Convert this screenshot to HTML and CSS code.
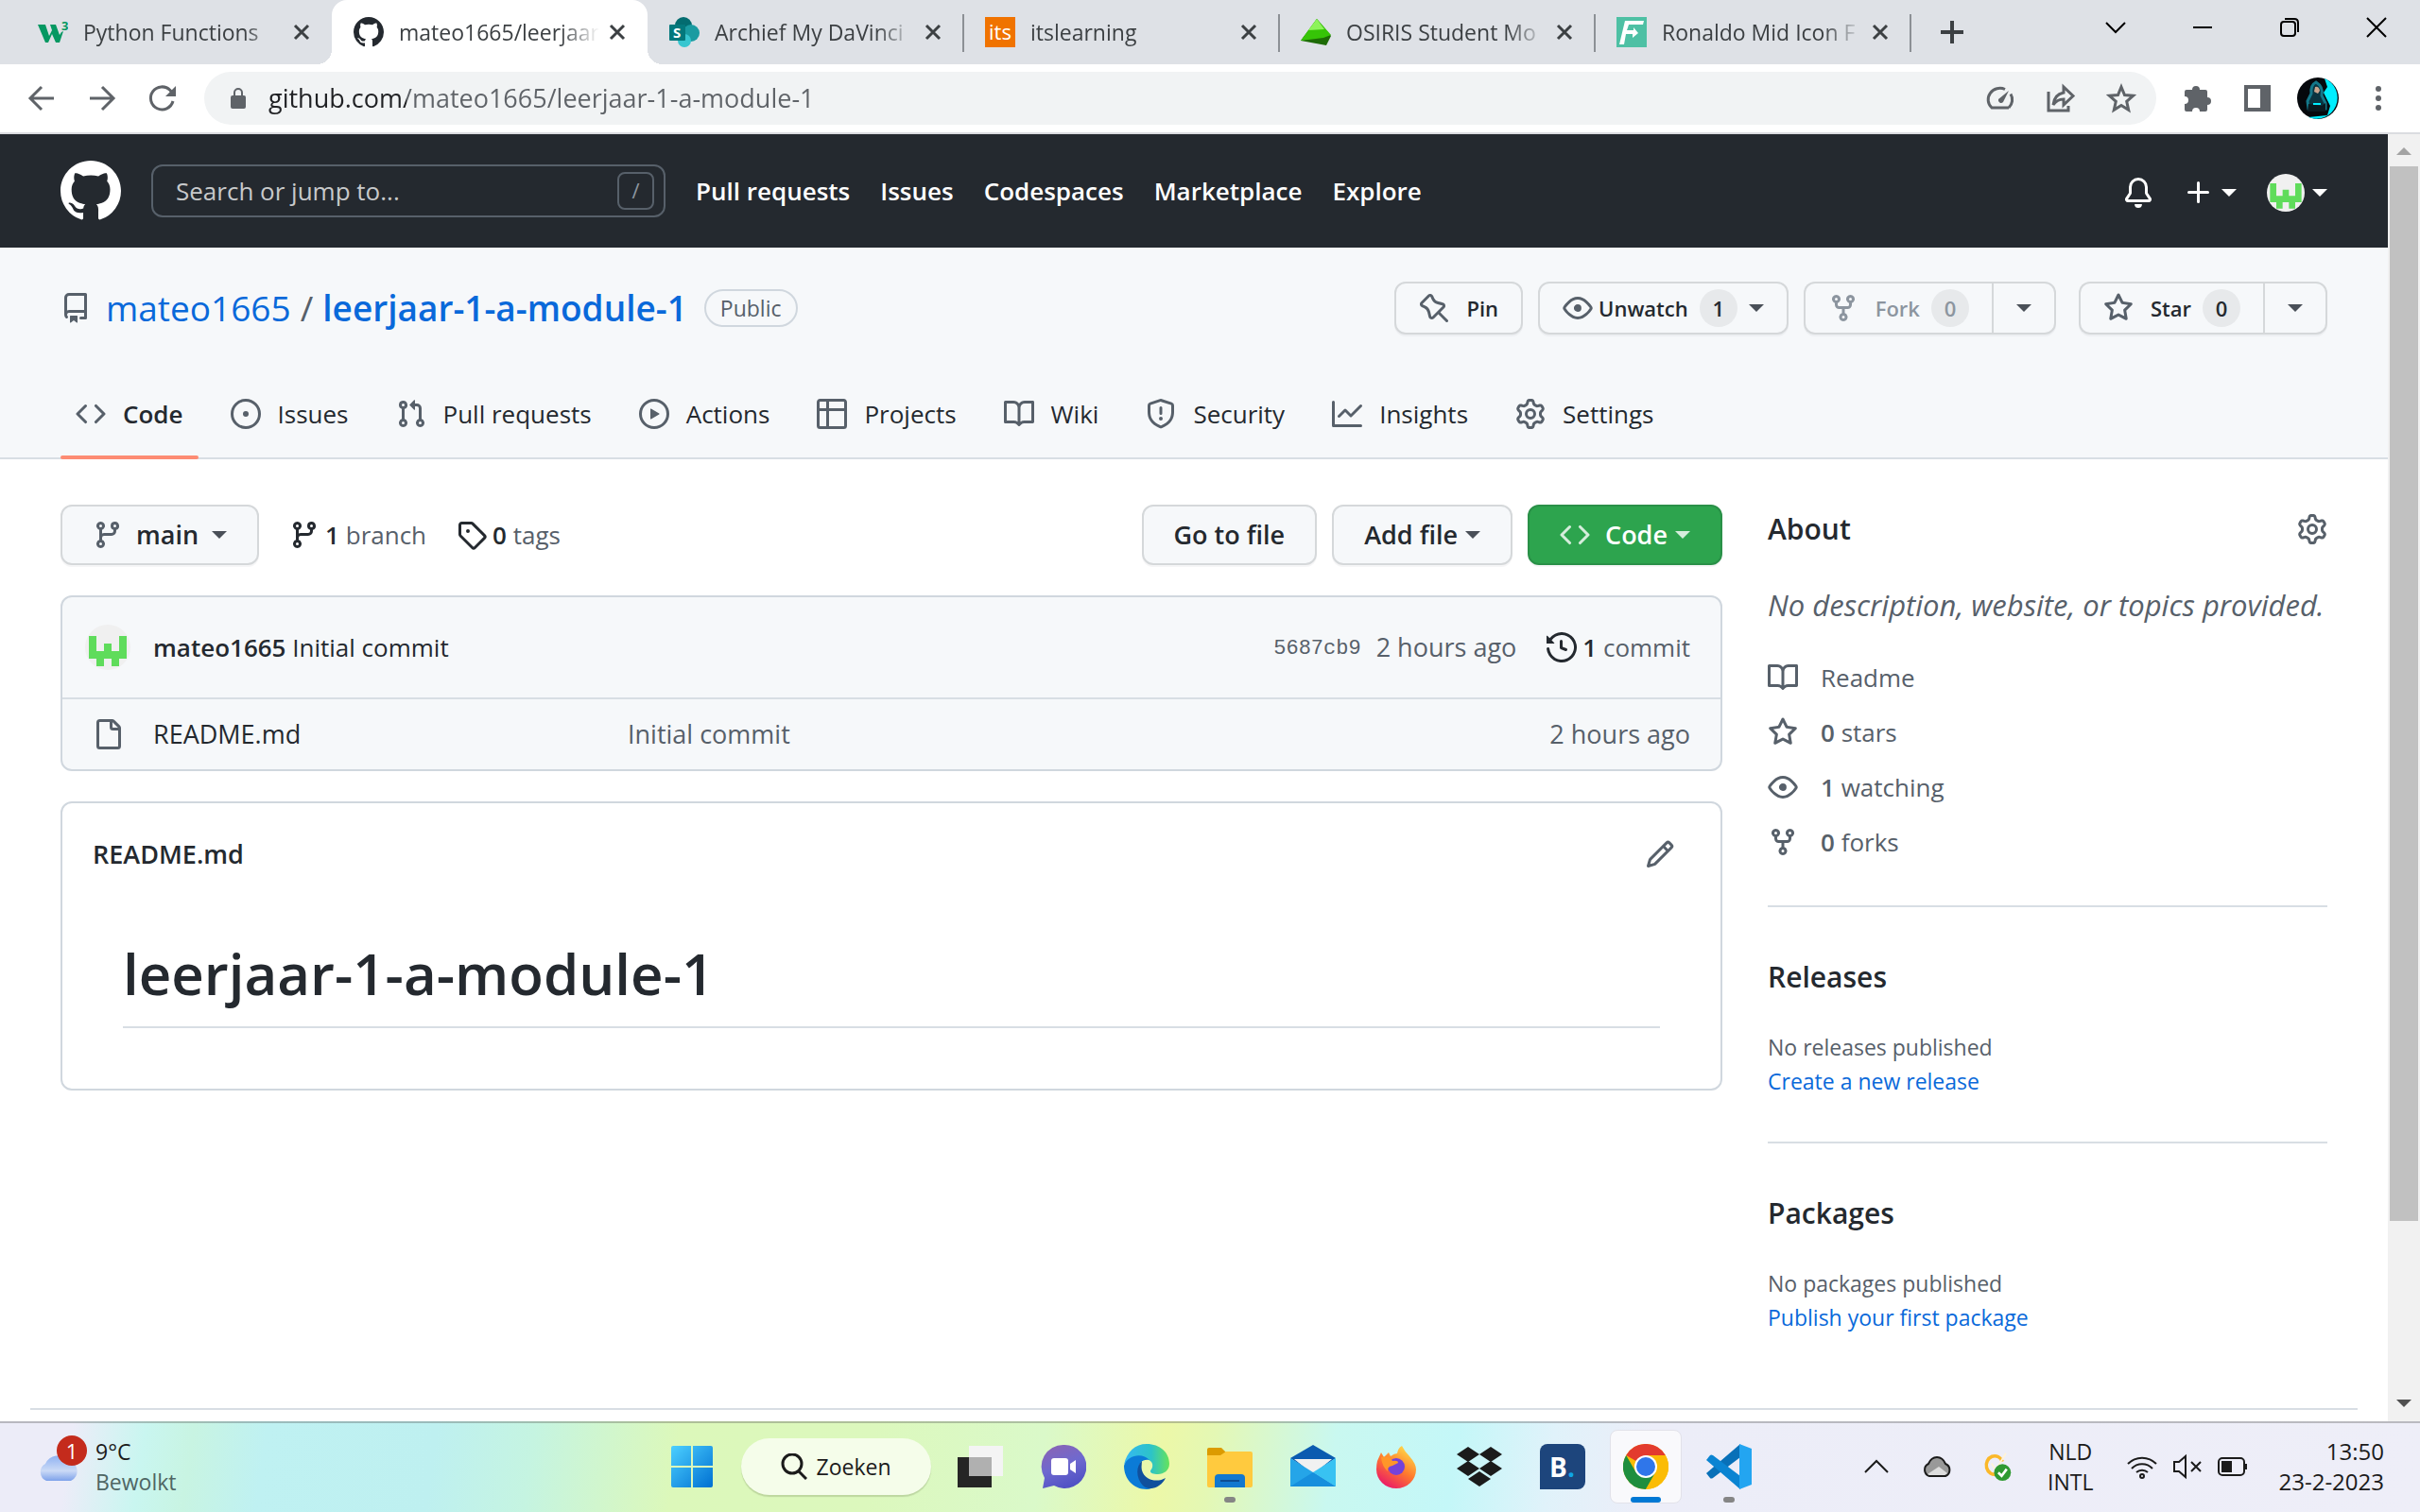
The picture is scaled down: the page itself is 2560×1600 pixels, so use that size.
FILE: index.html
```html
<!DOCTYPE html>
<html lang="nl">
<head>
<meta charset="utf-8">
<meta name="viewport" content="width=device-width, initial-scale=1">
<title>mateo1665/leerjaar-1-a-module-1</title>
<link rel="stylesheet" href="styles.css">
</head>
<body>
<svg class="sprite" aria-hidden="true">
  <symbol id="mark" viewBox="0 0 16 16"><path d="M8 0c4.42 0 8 3.58 8 8a8.013 8.013 0 0 1-5.45 7.59c-.4.08-.55-.17-.55-.38 0-.27.01-1.13.01-2.2 0-.75-.25-1.23-.54-1.48 1.78-.2 3.65-.88 3.65-3.95 0-.88-.31-1.59-.82-2.15.08-.2.36-1.02-.08-2.12 0 0-.67-.22-2.2.82-.64-.18-1.32-.27-2-.27-.68 0-1.36.09-2 .27-1.53-1.03-2.2-.82-2.2-.82-.44 1.1-.16 1.92-.08 2.12-.51.56-.82 1.28-.82 2.15 0 3.06 1.86 3.75 3.64 3.95-.23.2-.44.55-.51 1.07-.46.21-1.61.55-2.33-.66-.15-.24-.6-.83-1.23-.82-.67.01-.27.38.01.53.34.19.73.9.82 1.13.16.45.68 1.31 2.69.94 0 .67.01 1.3.01 1.49 0 .21-.15.45-.55.38A7.995 7.995 0 0 1 0 8c0-4.42 3.58-8 8-8Z"/></symbol>
  <symbol id="code" viewBox="0 0 16 16"><path d="M4.72 3.22a.75.75 0 0 1 1.06 1.06L2.06 8l3.72 3.72a.75.75 0 1 1-1.06 1.06L.47 8.53a.75.75 0 0 1 0-1.06l4.25-4.25Zm6.56 0a.75.75 0 1 0-1.06 1.06L13.94 8l-3.72 3.72a.75.75 0 1 0 1.06 1.06l4.25-4.25a.75.75 0 0 0 0-1.06l-4.25-4.25Z"/></symbol>
  <symbol id="issue" viewBox="0 0 16 16"><path d="M8 9.5a1.5 1.5 0 1 0 0-3 1.5 1.5 0 0 0 0 3Z"/><path d="M8 0a8 8 0 1 1 0 16A8 8 0 0 1 8 0ZM1.5 8a6.5 6.5 0 1 0 13 0 6.5 6.5 0 0 0-13 0Z"/></symbol>
  <symbol id="pull" viewBox="0 0 16 16"><path d="M1.5 3.25a2.25 2.25 0 1 1 3 2.122v5.256a2.251 2.251 0 1 1-1.5 0V5.372A2.25 2.25 0 0 1 1.5 3.25Zm5.677-.177L9.573.677A.25.25 0 0 1 10 .854V2.5h1A2.5 2.5 0 0 1 13.5 5v5.628a2.251 2.251 0 1 1-1.5 0V5a1 1 0 0 0-1-1h-1v1.646a.25.25 0 0 1-.427.177L7.177 3.427a.25.25 0 0 1 0-.354ZM3.75 2.5a.75.75 0 1 0 0 1.5.75.75 0 0 0 0-1.5Zm0 9.5a.75.75 0 1 0 0 1.5.75.75 0 0 0 0-1.5Zm8.25.75a.75.75 0 1 0 1.5 0 .75.75 0 0 0-1.5 0Z"/></symbol>
  <symbol id="play" viewBox="0 0 16 16"><path d="M8 0a8 8 0 1 1 0 16A8 8 0 0 1 8 0ZM1.5 8a6.5 6.5 0 1 0 13 0 6.5 6.5 0 0 0-13 0Zm4.879-2.773 4.264 2.559a.25.25 0 0 1 0 .428l-4.264 2.559A.25.25 0 0 1 6 10.559V5.442a.25.25 0 0 1 .379-.215Z"/></symbol>
  <symbol id="table" viewBox="0 0 16 16"><path d="M0 1.75C0 .784.784 0 1.75 0h12.5C15.216 0 16 .784 16 1.75v12.5A1.75 1.75 0 0 1 14.25 16H1.75A1.75 1.75 0 0 1 0 14.25ZM6.5 6.5v8h7.75a.25.25 0 0 0 .25-.25V6.5Zm8-1.5V1.75a.25.25 0 0 0-.25-.25H6.5V5Zm-13 1.5v7.75c0 .138.112.25.25.25H5v-8ZM5 5V1.5H1.75a.25.25 0 0 0-.25.25V5Z"/></symbol>
  <symbol id="book" viewBox="0 0 16 16"><path d="M0 1.75A.75.75 0 0 1 .75 1h4.253c1.227 0 2.317.59 3 1.501A3.743 3.743 0 0 1 11.006 1h4.245a.75.75 0 0 1 .75.75v10.5a.75.75 0 0 1-.75.75h-4.507a2.25 2.25 0 0 0-1.591.659l-.622.621a.75.75 0 0 1-1.06 0l-.622-.621A2.25 2.25 0 0 0 5.258 13H.75a.75.75 0 0 1-.75-.75Zm7.251 10.324.004-5.073-.002-2.253A2.25 2.25 0 0 0 5.003 2.5H1.5v9h3.757a3.75 3.75 0 0 1 1.994.574ZM8.755 4.75l-.004 7.322a3.752 3.752 0 0 1 1.992-.572H14.5v-9h-3.495a2.25 2.25 0 0 0-2.25 2.25Z"/></symbol>
  <symbol id="shield" viewBox="0 0 16 16"><path d="M7.467.133a1.748 1.748 0 0 1 1.066 0l5.25 1.68A1.75 1.75 0 0 1 15 3.48V7c0 1.566-.32 3.182-1.303 4.682-.983 1.498-2.585 2.813-5.032 3.855a1.697 1.697 0 0 1-1.33 0c-2.447-1.042-4.049-2.357-5.032-3.855C1.32 10.182 1 8.566 1 7V3.48a1.755 1.755 0 0 1 1.217-1.667Zm.61 1.429a.25.25 0 0 0-.153 0l-5.25 1.68a.25.25 0 0 0-.174.238V7c0 1.358.275 2.666 1.057 3.86.784 1.194 2.121 2.34 4.366 3.297a.196.196 0 0 0 .154 0c2.245-.956 3.582-2.104 4.366-3.298C13.225 9.666 13.5 8.36 13.5 7V3.48a.251.251 0 0 0-.174-.237l-5.25-1.68ZM8.75 4.75v3a.75.75 0 0 1-1.5 0v-3a.75.75 0 0 1 1.5 0ZM9 10.5a1 1 0 1 1-2 0 1 1 0 0 1 2 0Z"/></symbol>
  <symbol id="graph" viewBox="0 0 16 16"><path d="M1.5 1.75V13.5h13.75a.75.75 0 0 1 0 1.5H.75a.75.75 0 0 1-.75-.75V1.75a.75.75 0 0 1 1.5 0Zm14.28 2.53-5.25 5.25a.75.75 0 0 1-1.06 0L7 7.06 4.28 9.78a.751.751 0 0 1-1.042-.018.751.751 0 0 1-.018-1.042l3.25-3.25a.75.75 0 0 1 1.06 0L10 7.94l4.72-4.72a.751.751 0 0 1 1.042.018.751.751 0 0 1 .018 1.042Z"/></symbol>
  <symbol id="gear" viewBox="0 0 16 16"><path d="M8 0a8.2 8.2 0 0 1 .701.031C9.444.095 9.99.645 10.16 1.29l.288 1.107c.018.066.079.158.212.224.231.114.454.243.668.386.123.082.233.09.299.071l1.103-.303c.644-.176 1.392.021 1.82.63.27.385.506.792.704 1.218.315.675.111 1.422-.364 1.891l-.814.806c-.049.048-.098.147-.088.294.016.257.016.515 0 .772-.01.147.038.246.088.294l.814.806c.475.469.679 1.216.364 1.891a7.977 7.977 0 0 1-.704 1.217c-.428.61-1.176.807-1.82.63l-1.102-.302c-.067-.019-.177-.011-.3.071a5.909 5.909 0 0 1-.668.386c-.133.066-.194.158-.211.224l-.29 1.106c-.168.646-.715 1.196-1.458 1.26a8.006 8.006 0 0 1-1.402 0c-.743-.064-1.289-.614-1.458-1.26l-.289-1.106c-.018-.066-.079-.158-.212-.224a5.738 5.738 0 0 1-.668-.386c-.123-.082-.233-.09-.299-.071l-1.103.303c-.644.176-1.392-.021-1.82-.63a8.12 8.12 0 0 1-.704-1.218c-.315-.675-.111-1.422.363-1.891l.815-.806c.05-.048.098-.147.088-.294a6.214 6.214 0 0 1 0-.772c.01-.147-.038-.246-.088-.294l-.815-.806C.635 6.045.431 5.298.746 4.623a7.92 7.92 0 0 1 .704-1.217c.428-.61 1.176-.807 1.82-.63l1.102.302c.067.019.177.011.3-.071.214-.143.437-.272.668-.386.133-.066.194-.158.211-.224l.29-1.106C6.009.645 6.556.095 7.299.03 7.53.01 7.764 0 8 0Zm-.571 1.525c-.036.003-.108.036-.137.146l-.289 1.105c-.147.561-.549.967-.998 1.189-.173.086-.34.183-.5.29-.417.278-.97.423-1.529.27l-1.103-.303c-.109-.03-.175.016-.195.045-.22.312-.412.644-.573.99-.014.031-.021.11.059.19l.815.806c.411.406.562.957.53 1.456a4.709 4.709 0 0 0 0 .582c.032.499-.119 1.05-.53 1.456l-.815.806c-.081.08-.073.159-.059.19.162.346.353.677.573.989.02.03.085.076.195.046l1.102-.303c.56-.153 1.113-.008 1.53.27.161.107.328.204.501.29.447.222.85.629.997 1.189l.289 1.105c.029.109.101.143.137.146a6.6 6.6 0 0 0 1.142 0c.036-.003.108-.036.137-.146l.289-1.105c.147-.561.549-.967.998-1.189.173-.086.34-.183.5-.29.417-.278.97-.423 1.529-.27l1.103.303c.109.029.175-.016.195-.045.22-.313.411-.644.573-.99.014-.031.021-.11-.059-.19l-.815-.806c-.411-.406-.562-.957-.53-1.456a4.709 4.709 0 0 0 0-.582c-.032-.499.119-1.05.53-1.456l.815-.806c.081-.08.073-.159.059-.19a6.464 6.464 0 0 0-.573-.989c-.02-.03-.085-.076-.195-.046l-1.102.303c-.56.153-1.113.008-1.53-.27a4.44 4.44 0 0 0-.501-.29c-.447-.222-.85-.629-.997-1.189l-.289-1.105c-.029-.11-.101-.143-.137-.146a6.6 6.6 0 0 0-1.142 0ZM11 8a3 3 0 1 1-6 0 3 3 0 0 1 6 0ZM9.5 8a1.5 1.5 0 1 0-3.001.001A1.5 1.5 0 0 0 9.5 8Z"/></symbol>
  <symbol id="branch" viewBox="0 0 16 16"><path d="M9.5 3.25a2.25 2.25 0 1 1 3 2.122V6A2.5 2.5 0 0 1 10 8.5H6a1 1 0 0 0-1 1v1.128a2.251 2.251 0 1 1-1.5 0V5.372a2.25 2.25 0 1 1 1.5 0v1.836A2.493 2.493 0 0 1 6 7h4a1 1 0 0 0 1-1v-.628A2.25 2.25 0 0 1 9.5 3.25Zm-6 0a.75.75 0 1 0 1.5 0 .75.75 0 0 0-1.5 0Zm8.25-.75a.75.75 0 1 0 0 1.5.75.75 0 0 0 0-1.5ZM4.25 12a.75.75 0 1 0 0 1.5.75.75 0 0 0 0-1.5Z"/></symbol>
  <symbol id="fork" viewBox="0 0 16 16"><path d="M5 5.372v.878c0 .414.336.75.75.75h4.5a.75.75 0 0 0 .75-.75v-.878a2.25 2.25 0 1 1 1.5 0v.878a2.25 2.25 0 0 1-2.25 2.25h-1.5v2.128a2.251 2.251 0 1 1-1.5 0V8.5h-1.5A2.25 2.25 0 0 1 3.5 6.25v-.878a2.25 2.25 0 1 1 1.5 0ZM5 3.25a.75.75 0 1 0-1.5 0 .75.75 0 0 0 1.5 0Zm6.75.75a.75.75 0 1 0 0-1.5.75.75 0 0 0 0 1.5Zm-3 8.75a.75.75 0 1 0-1.5 0 .75.75 0 0 0 1.5 0Z"/></symbol>
  <symbol id="star" viewBox="0 0 16 16"><path d="M8 .25a.75.75 0 0 1 .673.418l1.882 3.815 4.21.612a.75.75 0 0 1 .416 1.279l-3.046 2.97.719 4.192a.751.751 0 0 1-1.088.791L8 12.347l-3.766 1.98a.75.75 0 0 1-1.088-.79l.72-4.194L.818 6.374a.75.75 0 0 1 .416-1.28l4.21-.611L7.327.668A.75.75 0 0 1 8 .25Zm0 2.445L6.615 5.5a.75.75 0 0 1-.564.41l-3.097.45 2.24 2.184a.75.75 0 0 1 .216.664l-.528 3.084 2.769-1.456a.75.75 0 0 1 .698 0l2.77 1.456-.53-3.084a.75.75 0 0 1 .216-.664l2.24-2.183-3.096-.45a.75.75 0 0 1-.564-.41L8 2.694Z"/></symbol>
  <symbol id="eye" viewBox="0 0 16 16"><path d="M8 2c1.981 0 3.671.992 4.933 2.078 1.27 1.091 2.187 2.345 2.637 3.023a1.62 1.62 0 0 1 0 1.798c-.45.678-1.367 1.932-2.637 3.023C11.67 13.008 9.981 14 8 14c-1.981 0-3.671-.992-4.933-2.078C1.797 10.83.88 9.576.43 8.898a1.62 1.62 0 0 1 0-1.798c.45-.677 1.367-1.931 2.637-3.022C4.33 2.992 6.019 2 8 2ZM1.679 7.932a.12.12 0 0 0 0 .136c.411.622 1.241 1.75 2.366 2.717C5.176 11.758 6.527 12.5 8 12.5c1.473 0 2.825-.742 3.955-1.715 1.124-.967 1.954-2.096 2.366-2.717a.12.12 0 0 0 0-.136c-.412-.621-1.242-1.75-2.366-2.717C10.824 4.242 9.473 3.5 8 3.5c-1.473 0-2.825.742-3.955 1.715-1.124.967-1.954 2.096-2.366 2.717ZM8 10a2 2 0 1 1-.001-3.999A2 2 0 0 1 8 10Z"/></symbol>
  <symbol id="repo" viewBox="0 0 16 16"><path d="M2 2.5A2.5 2.5 0 0 1 4.5 0h8.75a.75.75 0 0 1 .75.75v12.5a.75.75 0 0 1-.75.75h-2.5a.75.75 0 0 1 0-1.5h1.75v-2h-8a1 1 0 0 0-.714 1.7.75.75 0 1 1-1.072 1.05A2.495 2.495 0 0 1 2 11.5Zm10.5-1h-8a1 1 0 0 0-1 1v6.708A2.486 2.486 0 0 1 4.5 9h8ZM5 12.25a.25.25 0 0 1 .25-.25h3.5a.25.25 0 0 1 .25.25v3.25a.25.25 0 0 1-.4.2l-1.45-1.087a.249.249 0 0 0-.3 0L5.4 15.7a.25.25 0 0 1-.4-.2Z"/></symbol>
  <symbol id="tag" viewBox="0 0 16 16"><path d="M1 7.775V2.75C1 1.784 1.784 1 2.75 1h5.025c.464 0 .91.184 1.238.513l6.25 6.25a1.75 1.75 0 0 1 0 2.474l-5.026 5.026a1.75 1.75 0 0 1-2.474 0l-6.25-6.25A1.752 1.752 0 0 1 1 7.775Zm1.5 0c0 .066.026.13.073.177l6.25 6.25a.25.25 0 0 0 .354 0l5.025-5.025a.25.25 0 0 0 0-.354l-6.25-6.25a.25.25 0 0 0-.177-.073H2.75a.25.25 0 0 0-.25.25ZM6 5a1 1 0 1 1 0 2 1 1 0 0 1 0-2Z"/></symbol>
  <symbol id="history" viewBox="0 0 16 16"><path d="m.427 1.927 1.215 1.215a8.002 8.002 0 1 1-1.6 5.685.75.75 0 1 1 1.493-.154 6.5 6.5 0 1 0 1.18-4.458l1.358 1.358A.25.25 0 0 1 3.896 6H.25A.25.25 0 0 1 0 5.75V2.104a.25.25 0 0 1 .427-.177ZM7.75 4a.75.75 0 0 1 .75.75v2.992l2.028.812a.75.75 0 0 1-.557 1.392l-2.5-1A.751.751 0 0 1 7 8.25v-3.5A.75.75 0 0 1 7.75 4Z"/></symbol>
  <symbol id="file" viewBox="0 0 16 16"><path d="M2 1.75C2 .784 2.784 0 3.75 0h6.586c.464 0 .909.184 1.237.513l2.914 2.914c.329.328.513.773.513 1.237v9.586A1.75 1.75 0 0 1 13.25 16h-9.5A1.75 1.75 0 0 1 2 14.25Zm1.75-.25a.25.25 0 0 0-.25.25v12.5c0 .138.112.25.25.25h9.5a.25.25 0 0 0 .25-.25V6h-2.75A1.75 1.75 0 0 1 9 4.25V1.5Zm6.75.062V4.25c0 .138.112.25.25.25h2.688l-.011-.013-2.914-2.914-.013-.011Z"/></symbol>
  <symbol id="pencil" viewBox="0 0 16 16"><path d="M11.013 1.427a1.75 1.75 0 0 1 2.474 0l1.086 1.086a1.75 1.75 0 0 1 0 2.474l-8.61 8.61c-.21.21-.47.364-.756.445l-3.251.93a.75.75 0 0 1-.927-.928l.929-3.25c.081-.286.235-.547.445-.758l8.61-8.61Zm.176 4.823L9.75 4.81l-6.286 6.287a.253.253 0 0 0-.064.108l-.558 1.953 1.953-.558a.253.253 0 0 0 .108-.064Zm1.238-3.763a.25.25 0 0 0-.354 0L10.811 3.75l1.439 1.44 1.263-1.263a.25.25 0 0 0 0-.354Z"/></symbol>
  <symbol id="bell" viewBox="0 0 16 16"><path d="M8 16a2 2 0 0 0 1.985-1.75c.017-.137-.097-.25-.235-.25h-3.5c-.138 0-.252.113-.235.25A2 2 0 0 0 8 16ZM3 5a5 5 0 0 1 10 0v2.947c0 .05.015.098.042.139l1.703 2.555A1.519 1.519 0 0 1 13.482 13H2.518a1.516 1.516 0 0 1-1.263-2.36l1.703-2.554A.255.255 0 0 0 3 7.947Zm5-3.5A3.5 3.5 0 0 0 4.5 5v2.947c0 .346-.102.683-.294.97l-1.703 2.556a.017.017 0 0 0-.003.01l.001.006c0 .002.002.004.004.006l.006.004.007.001h10.964l.007-.001.006-.004.004-.006.001-.007a.017.017 0 0 0-.003-.01l-1.703-2.554a1.745 1.745 0 0 1-.294-.97V5A3.5 3.5 0 0 0 8 1.5Z"/></symbol>
  <symbol id="plus" viewBox="0 0 16 16"><path d="M7.75 2a.75.75 0 0 1 .75.75V7h4.25a.75.75 0 0 1 0 1.5H8.5v4.25a.75.75 0 0 1-1.5 0V8.5H2.75a.75.75 0 0 1 0-1.5H7V2.75A.75.75 0 0 1 7.75 2Z"/></symbol>
  <symbol id="pin" viewBox="0 0 16 16"><path transform="matrix(-1 0 0 1 16 0)" fill-rule="evenodd" d="m11.294.984 3.722 3.722a1.75 1.75 0 0 1-.504 2.826l-1.327.613a3.089 3.089 0 0 0-1.707 2.084l-.584 2.454c-.317 1.332-1.972 1.8-2.94.832L5.75 11.311 1.78 15.28a.749.749 0 1 1-1.06-1.06l3.969-3.97-2.204-2.204c-.968-.968-.5-2.623.832-2.94l2.454-.584a3.08 3.08 0 0 0 2.084-1.707l.613-1.327a1.75 1.75 0 0 1 2.826-.504ZM6.283 9.723l2.732 2.731a.25.25 0 0 0 .42-.119l.584-2.454a4.586 4.586 0 0 1 2.537-3.098l1.328-.613a.25.25 0 0 0 .072-.404l-3.722-3.722a.25.25 0 0 0-.404.072l-.613 1.328a4.584 4.584 0 0 1-3.098 2.537l-2.454.584a.25.25 0 0 0-.119.42l2.731 2.732Z"/></symbol>
  <symbol id="close" viewBox="0 0 20 20"><path d="M3 3l14 14M17 3L3 17" fill="none" stroke="currentColor" stroke-width="3"/></symbol>
  <symbol id="identicon" viewBox="0 0 12 12"><path fill="#f0f0f0" d="M0 0h12v12H0z"/><path fill="#5fdc5b" d="M1 3h2v4h2V5h2v2h2V3h2v6H9v2H7V9H5v2H3V9H1z"/></symbol>
</svg>

<header class="browser">
  <div class="tabstrip">
    <div class="tab">
      <svg class="favicon" viewBox="0 0 32 32"><path d="M0 8h8l4 12 3-6-2-6h6l4 11 2-3 2-1-4 12h-4l-4-9-4 9H8z" fill="#059862"/><text x="25" y="14" font-family="Open Sans" font-weight="700" font-size="13" fill="#059862">3</text></svg>
      <span class="tab-title">Python Functions</span>
      <button class="tab-close" aria-label="Sluiten"><svg><use href="#close"/></svg></button>
    </div>
    <div class="tab active">
      <svg class="favicon mark"><use href="#mark"/></svg>
      <span class="tab-title">mateo1665/leerjaar</span>
      <button class="tab-close" aria-label="Sluiten"><svg><use href="#close"/></svg></button>
    </div>
    <div class="tab line">
      <svg class="favicon" viewBox="0 0 32 32"><circle cx="15" cy="9" r="9" fill="#036c70"/><circle cx="23" cy="17" r="9" fill="#1a9ba1"/><circle cx="16" cy="25" r="7" fill="#37c6d0"/><rect y="8" width="17" height="17" rx="1" fill="#03787c"/><text x="4" y="22" font-family="Open Sans" font-weight="700" font-size="15" fill="#fff">S</text></svg>
      <span class="tab-title">Archief My DaVinci</span>
      <button class="tab-close" aria-label="Sluiten"><svg><use href="#close"/></svg></button>
    </div>
    <div class="tab line">
      <span class="favicon its">its</span>
      <span class="tab-title">itslearning</span>
      <button class="tab-close" aria-label="Sluiten"><svg><use href="#close"/></svg></button>
    </div>
    <div class="tab line">
      <svg class="favicon" viewBox="0 0 32 32"><path d="M17 2L32 20l-5 10L0 25z" fill="#1d6b06"/><path d="M17 2L0 25l24-3 8-3z" fill="#36c407"/><path d="M17 2L8 14l17-1z" fill="#8df35a"/></svg>
      <span class="tab-title">OSIRIS Student Mo</span>
      <button class="tab-close" aria-label="Sluiten"><svg><use href="#close"/></svg></button>
    </div>
    <div class="tab line">
      <svg class="favicon" viewBox="0 0 32 32"><path d="M0 0h32v32H0z" fill="#4ec0a4"/><path d="M9 4h20l-1 4H13l-2 6h7v-3l5 6-6 5v-4h-7L8 29H3z" fill="#fff"/></svg>
      <span class="tab-title">Ronaldo Mid Icon F</span>
      <button class="tab-close" aria-label="Sluiten"><svg><use href="#close"/></svg></button>
    </div>
    <button class="new-tab" aria-label="Nieuw tabblad"><svg viewBox="0 0 24 24"><path d="M12 0v24M0 12h24" stroke="#3c4043" stroke-width="4"/></svg></button>
    <div class="window-controls">
      <button aria-label="Tabbladen zoeken"><svg viewBox="0 0 20 20"><path d="M0 5l10 10L20 5"/></svg></button>
      <button aria-label="Minimaliseren"><svg viewBox="0 0 20 20"><path d="M0 10h20"/></svg></button>
      <button aria-label="Vorig formaat"><svg viewBox="0 0 20 20"><rect x="1" y="4" width="15" height="15" rx="3"/><path d="M5 1h10q4 0 4 4v10"/></svg></button>
      <button aria-label="Venster sluiten"><svg viewBox="0 0 20 20"><path d="M0 0l20 20M20 0L0 20"/></svg></button>
    </div>
  </div>
  <div class="toolbar">
    <button class="tool" aria-label="Terug"><svg viewBox="0 0 32 32"><path d="M29 16H5M16 4L4 16l12 12"/></svg></button>
    <button class="tool" aria-label="Vooruit"><svg viewBox="0 0 32 32"><path d="M3 16h24M16 4l12 12-12 12"/></svg></button>
    <button class="tool" aria-label="Vernieuwen"><svg viewBox="0 0 32 32"><path d="M27 19A12 12 0 1 1 24 7.500l3 3.500"/><path class="solid" d="M30 3v11H19z"/></svg></button>
    <div class="omnibox">
      <svg class="lock" viewBox="0 0 16 22"><rect y="8" width="16" height="14" rx="2" fill="#5f6368"/><path d="M4 9V5a4 4 0 0 1 8 0v4" fill="none" stroke="#5f6368" stroke-width="2"/></svg>
      <input class="url" type="text" aria-label="Adresbalk" value="github.com/mateo1665/leerjaar-1-a-module-1">
      <button class="tool" aria-label="Prestaties"><svg viewBox="0 0 32 32"><path d="M25 26H7A12.500 12 0 0 1 21 6.500M27 11.500A12.500 12 0 0 1 25 26"/><path class="solid" d="M25 8l-6 12a3 3 0 0 1-5-3z"/></svg></button>
      <button class="tool" aria-label="Delen"><svg viewBox="0 0 32 32"><path d="M3 9v20h21v-5M19 4v6Q9 12 8 23q4-6 11-6v6l10-9.500z"/></svg></button>
      <button class="tool" aria-label="Bladwijzer"><svg viewBox="0 0 32 32"><path d="M16 4l3.500 8.500 9 .8-6.800 6 2 9L16 23.500 8.300 28.300l2-9-6.800-6 9-.8z"/></svg></button>
    </div>
    <button class="tool" aria-label="Extensies"><svg viewBox="0 0 32 32"><path class="solid" d="M11 7a4 4 0 0 1 8 0h6a2 2 0 0 1 2 2v6a4 4 0 0 1 0 8v5a2 2 0 0 1-2 2h-6a4 4 0 0 0-8 0H5a2 2 0 0 1-2-2v-6a4 4 0 0 0 0-8V9a2 2 0 0 1 2-2z"/></svg></button>
    <button class="tool" aria-label="Zijvenster"><svg viewBox="0 0 32 32"><path class="solid" fill-rule="evenodd" d="M2 2h28v28H2zM6 6v20h13V6z"/></svg></button>
    <button class="tool profile" aria-label="Profiel"><svg viewBox="0 0 44 44"><circle cx="22" cy="22" r="22" fill="#05080c"/><path d="M29 1a22 22 0 0 1-17 41l20-2 3-10-7-14 4-6z" fill="#0ef"/><path d="M20 5q-6 3-5 12l-4 8 1 8h18v-6l-4-8q2-9-6-14z" fill="#0a3440" stroke="#13788a"/><path d="M19 10q4-1 5 4l-2 3-4-2z" fill="#c9a58d"/><path d="M12 28l14 2 4-3v9H11z" fill="#0b1a20"/><path d="M17 28h8" stroke="#0ef" stroke-width="2"/></svg></button>
    <button class="tool" aria-label="Menu"><svg viewBox="0 0 32 32"><g class="solid"><circle cx="16" cy="6" r="3"/><circle cx="16" cy="16" r="3"/><circle cx="16" cy="26" r="3"/></g></svg></button>
  </div>
</header>

<div class="viewport">
  <div class="page">
    <header class="site-header">
      <a class="logo" href="#" aria-label="Homepage"><svg><use href="#mark"/></svg></a>
      <label class="search"><input type="text" aria-label="Search" placeholder="Search or jump to..."><kbd>/</kbd></label>
      <nav class="site-nav"><a href="#">Pull requests</a><a href="#">Issues</a><a href="#">Codespaces</a><a href="#">Marketplace</a><a href="#">Explore</a></nav>
      <div class="user-tools">
        <button aria-label="Notifications"><svg class="icon"><use href="#bell"/></svg></button>
        <button class="with-caret" aria-label="Create new"><svg class="icon"><use href="#plus"/></svg><i class="caret"></i></button>
        <button class="with-caret" aria-label="Account"><svg class="avatar"><use href="#identicon"/></svg><i class="caret"></i></button>
      </div>
    </header>

    <section class="repo-head">
      <div class="repo-title">
        <svg class="icon"><use href="#repo"/></svg>
        <h2><a href="#">mateo1665</a><span>/</span><a class="strong" href="#">leerjaar-1-a-module-1</a></h2>
        <span class="badge">Public</span>
        <div class="repo-actions">
          <button class="btn small"><svg class="icon"><use href="#pin"/></svg><span>Pin</span></button>
          <button class="btn small watch"><svg class="icon"><use href="#eye"/></svg><span>Unwatch</span><span class="count">1</span><i class="caret"></i></button>
          <div class="btn-group">
            <button class="btn small" disabled><svg class="icon"><use href="#fork"/></svg><span>Fork</span><span class="count">0</span></button><button class="btn small drop" aria-label="Forks"><i class="caret"></i></button>
          </div>
          <div class="btn-group last">
            <button class="btn small"><svg class="icon"><use href="#star"/></svg><span>Star</span><span class="count">0</span></button><button class="btn small drop" aria-label="Lists"><i class="caret"></i></button>
          </div>
        </div>
      </div>
      <nav class="repo-nav">
        <a class="current" href="#"><svg class="icon"><use href="#code"/></svg>Code</a>
        <a href="#"><svg class="icon"><use href="#issue"/></svg>Issues</a>
        <a href="#"><svg class="icon"><use href="#pull"/></svg>Pull requests</a>
        <a href="#"><svg class="icon"><use href="#play"/></svg>Actions</a>
        <a href="#"><svg class="icon"><use href="#table"/></svg>Projects</a>
        <a href="#"><svg class="icon"><use href="#book"/></svg>Wiki</a>
        <a href="#"><svg class="icon"><use href="#shield"/></svg>Security</a>
        <a href="#"><svg class="icon"><use href="#graph"/></svg>Insights</a>
        <a href="#"><svg class="icon"><use href="#gear"/></svg>Settings</a>
      </nav>
    </section>

    <div class="layout">
      <main>
        <div class="file-nav">
          <button class="btn branch-btn"><svg class="icon"><use href="#branch"/></svg><span>main</span><i class="caret"></i></button>
          <a class="stat branches" href="#"><svg class="icon"><use href="#branch"/></svg><span><b>1</b> branch</span></a>
          <a class="stat tags" href="#"><svg class="icon"><use href="#tag"/></svg><span><b>0</b> tags</span></a>
          <div class="file-actions">
            <button class="btn">Go to file</button>
            <button class="btn tight">Add file<i class="caret"></i></button>
            <button class="btn tight primary"><svg class="icon"><use href="#code"/></svg><span>Code</span><i class="caret"></i></button>
          </div>
        </div>

        <section class="box files">
          <div class="commit">
            <svg class="avatar"><use href="#identicon"/></svg>
            <p><b>mateo1665</b> Initial commit</p>
            <div class="commit-meta">
              <a class="sha" href="#">5687cb9</a>
              <span class="when">2 hours ago</span>
              <a class="commits" href="#"><svg class="icon"><use href="#history"/></svg><span><b>1</b> commit</span></a>
            </div>
          </div>
          <table>
            <tr>
              <td class="kind"><svg class="icon"><use href="#file"/></svg></td>
              <td class="name"><a href="#">README.md</a></td>
              <td>Initial commit</td>
              <td class="age">2 hours ago</td>
            </tr>
          </table>
        </section>

        <section class="box readme">
          <div class="readme-head"><h3>README.md</h3><button aria-label="Edit this file"><svg class="icon"><use href="#pencil"/></svg></button></div>
          <article><h1>leerjaar-1-a-module-1</h1></article>
        </section>
      </main>

      <aside>
        <section>
          <div class="about-head"><h2>About</h2><button aria-label="Edit repository details"><svg class="icon"><use href="#gear"/></svg></button></div>
          <p class="description">No description, website, or topics provided.</p>
          <ul>
            <li><a href="#"><svg class="icon"><use href="#book"/></svg><span>Readme</span></a></li>
            <li><a href="#"><svg class="icon"><use href="#star"/></svg><span><b>0</b> stars</span></a></li>
            <li><a href="#"><svg class="icon"><use href="#eye"/></svg><span><b>1</b> watching</span></a></li>
            <li><a href="#"><svg class="icon"><use href="#fork"/></svg><span><b>0</b> forks</span></a></li>
          </ul>
        </section>
        <section><h2>Releases</h2><p class="note">No releases published<br><a href="#">Create a new release</a></p></section>
        <section><h2>Packages</h2><p class="note">No packages published<br><a href="#">Publish your first package</a></p></section>
      </aside>
    </div>
    <footer class="site-footer"></footer>
  </div>
  <div class="scrollbar" aria-hidden="true"><i class="up"></i><i class="thumb"></i><i class="down"></i></div>
</div>

<footer class="taskbar">
  <button class="weather">
    <span class="cloud"><svg viewBox="0 0 48 30"><defs><linearGradient id="cl" x2="0" y2="1"><stop stop-color="#8fb2f2"/><stop offset=".6" stop-color="#cbdaf6"/><stop offset="1" stop-color="#7ea2ea"/></linearGradient></defs><path d="M11 30a10 10 0 0 1-1-18A14 14 0 0 1 34 9a11 11 0 0 1 3 21z" fill="url(#cl)"/></svg><span class="alert">1</span></span>
    <span class="weather-text">9°C<br><small>Bewolkt</small></span>
  </button>
  <div class="apps">
    <button aria-label="Start"><svg viewBox="0 0 48 48"><defs><linearGradient id="win" x2="1" y2="1"><stop stop-color="#4cd0ff"/><stop offset="1" stop-color="#0070d2"/></linearGradient></defs><path d="M2 4q0-2 2-2h19v21H2zM25 2h19q2 0 2 2v19H25zM2 25h21v21H4q-2 0-2-2zM25 25h21v19q0 2-2 2H25z" fill="url(#win)"/></svg></button>
    <button class="task-search"><svg viewBox="0 0 28 28"><circle cx="12" cy="11" r="10"/><path d="M19 19l8 8"/></svg>Zoeken</button>
    <button aria-label="Taakweergave"><svg viewBox="0 0 48 48"><path d="M0 14h36v32H0z" fill="#252525"/><path d="M12 2h36v32H12z" fill="#f4f4f4"/><path d="M12 14h24v20H12z" fill="#b0b0b0"/></svg></button>
    <button aria-label="Chat"><svg viewBox="0 0 48 48"><defs><linearGradient id="chat" x1=".2" x2=".6" y2="1"><stop stop-color="#8a64b4"/><stop offset=".5" stop-color="#6e69cf"/><stop offset="1" stop-color="#4f50c4"/></linearGradient></defs><path d="M24 1a23 23 0 1 1-10 43L2 47l2-11A23 23 0 0 1 24 1z" fill="url(#chat)"/><rect x="11" y="15" width="18" height="18" rx="3" fill="#fff"/><path d="M31 21l6-4v14l-6-4z" fill="#fff"/></svg></button>
    <button aria-label="Edge"><svg viewBox="0 0 48 48"><defs><linearGradient id="e1"><stop stop-color="#35b8f3"/><stop offset=".6" stop-color="#2cc3c8"/><stop offset="1" stop-color="#66e35b"/></linearGradient></defs><path d="M0 22C3 8 12 0 24 0c14 0 24 9 24 21 0 7-6 11-12 11-5 0-8-1-8-3s3-3 2-8C28 14 8 10 0 22z" fill="url(#e1)"/><path d="M0 23c4-12 20-14 27-6-8-1-11 3-11 9 0 12 10 17 18 18-3 2-6 4-10 4C10 48 0 37 0 23z" fill="#0b7bd7"/><path d="M19 18c-7 6-6 19 1 26 8 7 20 1 24-8-8 5-22 3-25-8-1-4 0-7 0-10z" fill="#10509d"/></svg></button>
    <button class="open" aria-label="Verkenner"><svg viewBox="0 0 48 48"><path d="M0 6q0-2 2-2h13l5 5-5 5H0z" fill="#dc9b00"/><path d="M0 12h14l6-4h26q2 0 2 2v34q0 2-2 2H2q-2 0-2-2z" fill="#ffca3e"/><path d="M8 46V36q0-4 4-4h24q4 0 4 4v10z" fill="#1278cf"/><path d="M14 39h20" stroke="#0c4e94" stroke-width="2"/></svg></button>
    <button aria-label="Mail"><svg viewBox="0 0 48 48"><path d="M0 15L24 1l24 14-24 16z" fill="#0a5bb0"/><path d="M4 16h40L24 32z" fill="#f1f1f1"/><path d="M0 15l48 30H0z" fill="#25a5e8"/><path d="M48 15v30L24 30z" fill="#38c2f2"/><path d="M0 45l24-15 24 15z" fill="#168fdd"/></svg></button>
    <button aria-label="Firefox"><svg viewBox="0 0 48 48"><defs><linearGradient id="fx" x1=".8" x2=".2" y2="1"><stop stop-color="#ffe24a"/><stop offset=".5" stop-color="#ff7a2d"/><stop offset="1" stop-color="#e8106e"/></linearGradient></defs><path d="M4 18l4-9 3 5 5-5 2 4q4-3 7-3 1-6 5-8 3 6 8 11 7 8 7 14A21 20 0 0 1 3 27q0-5 1-9z" fill="url(#fx)"/><circle cx="24" cy="24" r="9" fill="#7542d9"/><path d="M8 14q9-2 12 4 6-1 6 2-4 2-6 3-6 1-5 6-6-5-7-15z" fill="#ff9629"/></svg></button>
    <button aria-label="Dropbox"><svg viewBox="0 0 48 48"><path d="M12 3l12 8-12 8L0 11zM36 3l12 8-12 8-12-8zM12 18l12 8-12 8L0 26zM36 18l12 8-12 8-12-8zM24 29l12 8-12 8-12-8z"/></svg></button>
    <button aria-label="Booking"><span class="booking">B<i>.</i></span></button>
    <button class="open focused" aria-label="Chrome"><svg viewBox="0 0 48 48"><circle cx="24" cy="24" r="24" fill="#fbbc04"/><path d="M24 24L3.200 12a24 24 0 0 1 41.600 0z" fill="#e33b2e"/><path d="M3.200 12A24 24 0 0 0 24 48l10.400-18L24 24 13.600 30z" fill="#1e8e3e"/><path d="M24 12h20.800a24 24 0 0 1-20.800 36l10.400-18z" fill="#fbbc04"/><circle cx="24" cy="24" r="12" fill="#fff"/><circle cx="24" cy="24" r="10" fill="#2f76ea"/></svg></button>
    <button class="open" aria-label="Visual Studio Code"><svg viewBox="0 0 48 48"><path d="M0 31l4 5q1 1 3 0L36 14V0z" fill="#0870b8"/><path d="M0 17l4-5q1-1 3 0l29 22v14z" fill="#0a84d2"/><path d="M35 0l13 5v38l-13 5z" fill="#23a5f1"/></svg></button>
  </div>
  <div class="tray">
    <button aria-label="Verborgen pictogrammen"><svg viewBox="0 0 32 32"><path d="M4 22L16 10l12 12"/></svg></button>
    <button aria-label="OneDrive"><svg viewBox="0 0 32 32"><path d="M8 26a7 7 0 0 1-1-13Q10 6 16 6t9 7a7 7 0 0 1 0 13z" fill="#999"/><path d="M6 24l12-8 9 7-3 2H8z" fill="#ddd" stroke="none"/></svg></button>
    <button aria-label="Synchronisatie"><svg viewBox="0 0 32 36"><path d="M15 27A10 11 0 1 1 22 12" stroke="#fbb829" stroke-width="4"/><path d="M9 14l5 8L26 2" stroke="#fff3d8"/><circle cx="22" cy="25" r="10" fill="#2f9a32" stroke="none"/><path d="M17 25l4 4 6-8" stroke="#fff" stroke-width="3"/></svg></button>
    <button class="lang">NLD<br>INTL</button>
    <button class="status" aria-label="Netwerk, geluid en batterij">
      <svg viewBox="0 0 32 32"><path d="M1 13a21 21 0 0 1 30 0M5 18a15 15 0 0 1 22 0M10 22a9 9 0 0 1 12 0"/><circle cx="16" cy="26" r="2"/></svg>
      <svg viewBox="0 0 32 32"><path d="M2 11h5l7-6v22l-7-6H2zM20 11l10 10M30 11L20 21"/></svg>
      <svg viewBox="0 0 32 32"><rect x="1" y="7" width="27" height="18" rx="4"/><path d="M5 11h9v10H5z" fill="#1b1b1b"/><path d="M30 13v6"/></svg>
    </button>
    <button class="clock">13:50<br>23-2-2023</button>
  </div>
</footer>
</body>
</html>
```
FILE: styles.css
```css
:root {
  --fg: #24292f;
  --muted: #57606a;
  --link: #0969da;
  --border: #d0d7de;
  --line: #d8dee4;
  --subtle: #f6f8fa;
  --text-xs: 22px;
  --text-s: 23px;
  --text-m: 26px;
  --text-ml: 27px;
  --text-l: 30px;
}

* { box-sizing: border-box; }

body {
  margin: 0;
  min-height: 100vh;
  display: flex;
  flex-direction: column;
  background: #fff;
  color: var(--fg);
  font: 400 26px/40px "Open Sans", "Noto Sans", sans-serif;
}

button {
  margin: 0;
  padding: 0;
  border: 0;
  background: none;
  color: inherit;
  font: inherit;
}

svg { display: block; flex: none; fill: currentColor; }
a { color: inherit; text-decoration: none; }
h1, h2, h3, p, ul { margin: 0; padding: 0; font-weight: 600; }
p, ul { font-weight: 400; list-style: none; }
b { font-weight: 600; }

.sprite { position: absolute; width: 0; height: 0; }
.icon { width: 32px; height: 32px; }
.caret {
  flex: none;
  border: 8px solid transparent;
  border-top-color: currentColor;
  border-bottom: 0;
}

/* Browser window */
.tabstrip {
  display: flex;
  height: 68px;
  padding-left: 17px;
  background: #dee1e6;
  color: #3c4043;
  font-size: var(--text-s);
}
.tab {
  position: relative;
  width: 334px;
  display: flex;
  align-items: center;
  padding: 0 20px 0 23px;
}
.tab.active { background: #fff; border-radius: 16px 16px 0 0; }
.tab.active::before, .tab.active::after {
  content: "";
  position: absolute;
  bottom: 0;
  width: 16px;
  height: 16px;
}
.tab.active::before { left: -16px; background: radial-gradient(circle at 0 0, transparent 16px, #fff 16px); }
.tab.active::after { right: -16px; background: radial-gradient(circle at 100% 0, transparent 16px, #fff 16px); }
.tab.line::after {
  content: "";
  position: absolute;
  right: -1px;
  top: 15px;
  width: 2px;
  height: 40px;
  background: #8c9095;
}
.favicon { flex: none; width: 32px; height: 32px; color: #24292f; }
.its { background: #f07300; color: #fff; font-size: var(--text-xs); line-height: 30px; text-align: center; }
.tab-title {
  width: 212px;
  margin: 0 9px 0 16px;
  white-space: nowrap;
  mask-image: linear-gradient(to right, #000 170px, transparent 212px);
}
.tab-close svg { width: 20px; height: 20px; }
.new-tab { margin-left: 32px; }
.new-tab svg { width: 24px; height: 24px; }
.window-controls { display: flex; margin-left: auto; height: 58px; }
.window-controls button { width: 92px; display: grid; place-items: center; }
.window-controls svg { width: 20px; height: 20px; fill: none; stroke: #000; stroke-width: 2; overflow: visible; }

.toolbar {
  display: flex;
  align-items: center;
  gap: 32px;
  height: 74px;
  padding: 0 28px;
  border-bottom: 2px solid #dadce0;
}
.tool svg { width: 32px; height: 32px; fill: none; stroke: #5f6368; stroke-width: 3; }
.tool .solid { fill: #5f6368; stroke: none; }
.profile { margin: 0 -6px; }
.profile svg { width: 44px; height: 44px; stroke: none; }
.omnibox {
  flex: 1;
  display: flex;
  align-items: center;
  gap: 32px;
  height: 56px;
  margin-left: -4px;
  margin-right: -5px;
  padding: 0 21px 0 28px;
  border-radius: 28px;
  background: #f1f3f4;
}
.lock { width: 16px; height: 22px; }
.url {
  flex: 1;
  height: 40px;
  padding: 0;
  margin-left: -8px;
  border: 0;
  outline: 0;
  font: inherit;
  font-size: var(--text-ml);
  color: transparent;
  background: linear-gradient(to right, #202124 146px, #5f6368 146px) text;
}

.viewport { flex: 1; display: flex; }
.page { flex: 1; min-width: 0; }
.scrollbar {
  width: 34px;
  display: flex;
  flex-direction: column;
  align-items: center;
  background: #f1f1f1;
}
.scrollbar .up { margin: 14px 0 12px; border: 8px solid transparent; border-bottom-color: #a3a3a3; border-top: 0; }
.scrollbar .thumb { flex: 1118; width: 30px; background: #c1c1c1; }
.scrollbar::after { content: ""; order: 1; flex: 189; }
.scrollbar .down { order: 2; margin: 0 0 15px; border: 8px solid transparent; border-top-color: #505050; border-bottom: 0; }

/* Site header */
.site-header {
  display: flex;
  align-items: center;
  gap: 32px;
  height: 120px;
  padding: 0 64px;
  background: #24292f;
  color: #fff;
}
.logo svg { width: 64px; height: 64px; }
.search {
  display: flex;
  align-items: center;
  width: 544px;
  height: 56px;
  padding: 0 10px 0 24px;
  border: 2px solid #57606a;
  border-radius: 12px;
}
.search input {
  flex: 1;
  min-width: 0;
  padding: 0;
  border: 0;
  outline: 0;
  background: none;
  color: #fff;
  font: inherit;
}
.search input::placeholder { color: #c8c9cb; opacity: 1; }
.search kbd {
  width: 39px;
  height: 40px;
  border: 2px solid #57606a;
  border-radius: 8px;
  color: #8c959f;
  font: 22px/34px "Open Sans", sans-serif;
  text-align: center;
}
.site-nav { display: flex; gap: 32px; font-weight: 600; }
.user-tools { display: flex; align-items: center; gap: 32px; margin-left: auto; padding-top: 4px; }
.with-caret { display: flex; align-items: center; gap: 8px; }
.user-tools .avatar { width: 40px; height: 40px; border-radius: 50%; }

/* Repository header */
.repo-head {
  padding: 36px 64px 0;
  border-bottom: 2px solid var(--line);
  background: var(--subtle);
}
.repo-title { display: flex; align-items: center; height: 56px; }
.repo-title > .icon { color: var(--muted); }
.repo-title h2 {
  margin: 0 18px 0 16px;
  color: var(--link);
  font: 400 37px/56px "Open Sans", sans-serif;
}
.repo-title h2 span { margin: 0 10px; color: var(--muted); }
.repo-title .strong { font-weight: 600; }
.badge {
  padding: 0 15px;
  border: 2px solid var(--border);
  border-radius: 20px;
  color: var(--muted);
  font: 500 23px/36px "Open Sans", sans-serif;
}
.repo-actions { display: flex; gap: 16px; margin-left: auto; }
.repo-nav { display: flex; gap: 18px; margin-top: 38px; }
.repo-nav a {
  position: relative;
  display: flex;
  align-items: center;
  gap: 18px;
  height: 92px;
  padding: 0 16px;
}
.repo-nav .icon { color: var(--muted); }
.repo-nav .current { font-weight: 600; }
.repo-nav .current::after {
  content: "";
  position: absolute;
  left: 0;
  right: 0;
  bottom: -2px;
  height: 4px;
  border-radius: 2px;
  background: #fd8c73;
}

.btn {
  display: flex;
  align-items: center;
  height: 64px;
  padding: 0 32px;
  border: 2px solid #d5d8da;
  border-radius: 12px;
  background: var(--subtle);
  box-shadow: 0 2px 0 rgba(31, 35, 40, .04);
  color: var(--fg);
  font-size: var(--text-ml);
  font-weight: 600;
  white-space: nowrap;
}
.btn .icon { color: var(--muted); }
.btn .caret { color: #4a5058; }
.btn.small { height: 56px; padding: 0 24px; font-size: var(--text-xs); gap: 18px; }
.btn.watch { gap: 6px; }
.btn.watch .count { margin: 0 6px; }
.btn:disabled { color: #8c959f; }
.btn:disabled .icon { color: #8c959f; }
.btn .count {
  min-width: 40px;
  padding: 0 12px;
  border-radius: 20px;
  background: #e7e9eb;
  line-height: 40px;
  text-align: center;
}
.btn-group .count { margin-left: -6px; }
.btn-group { display: flex; }
.btn-group.last { margin-left: 8px; }
.btn-group .btn:first-child { border-radius: 12px 0 0 12px; border-right-width: 0; }
.btn-group .drop { border-radius: 0 12px 12px 0; }

/* Repository content */
.layout {
  display: grid;
  grid-template-columns: minmax(0, 1fr) 592px;
  gap: 48px;
  padding: 48px 64px 32px;
}
.file-nav { display: flex; align-items: center; margin-bottom: 32px; }
.branch-btn { gap: 14px; }
.stat { display: flex; align-items: center; color: var(--muted); }
.stat .icon, .stat b, .commits .icon, .commits b { color: var(--fg); }
.branches { gap: 6px; margin-left: 32px; }
.tags { gap: 6px; margin-left: 32px; }
.file-actions { display: flex; gap: 16px; margin-left: auto; }
.btn.tight { gap: 8px; }
.btn.primary { border-color: #2a9048; background: #2da44e; color: #fff; }
.btn.primary .icon, .btn.primary .caret { color: #d5eddc; }
.btn.primary .icon { margin-right: 8px; }

.box { border: 2px solid var(--border); border-radius: 12px; }
.files { margin-bottom: 32px; background: var(--subtle); }
.commit {
  display: flex;
  align-items: center;
  height: 108px;
  padding: 0 32px 0 24px;
  border-bottom: 2px solid var(--line);
}
.commit .avatar { width: 48px; height: 48px; margin-right: 24px; border-radius: 50%; }
.commit-meta { display: flex; align-items: center; margin-left: auto; color: var(--muted); }
.sha { margin-right: 16px; padding-top: 4px; font: 22px/40px "Liberation Mono", monospace; }
.when { font-size: var(--text-ml); }
.commits { display: flex; gap: 6px; align-items: center; margin-left: 32px; }
.files table {
  width: 100%;
  height: 74px;
  border-collapse: collapse;
  table-layout: fixed;
  color: var(--muted);
  font-size: var(--text-ml);
}
.files td { padding: 0; }
.files .kind { width: 96px; padding-left: 32px; }
.files .name { width: 502px; color: var(--fg); }
.files .age { padding-right: 32px; text-align: right; }

.readme-head {
  display: flex;
  align-items: center;
  justify-content: space-between;
  height: 108px;
  padding: 0 48px 0 32px;
}
.readme-head h3 { font-size: var(--text-ml); }
.readme-head .icon { color: var(--muted); }
article { padding: 32px 64px 64px; }
article h1 {
  padding-bottom: 16px;
  border-bottom: 2px solid var(--line);
  font-size: 60px;
  line-height: 80px;
}

aside { color: var(--muted); }
aside section { padding: 50px 0 46px; border-top: 2px solid var(--line); }
aside section:first-child { padding-top: 2px; border-top: 0; }
aside h2 { color: var(--fg); font-size: var(--text-l); line-height: 48px; }
.about-head { display: flex; justify-content: space-between; align-items: center; }
.description { margin: 32px 0; font: italic 31px/48px "Open Sans", sans-serif; white-space: nowrap; }
aside ul { display: grid; gap: 16px; line-height: 42px; }
aside li a { display: flex; align-items: center; gap: 24px; }
.note { margin-top: 32px; font-size: var(--text-s); line-height: 36px; }
.note a { color: var(--link); }
.site-footer { height: 14px; margin: 0 32px; border-top: 2px solid var(--line); }

/* Taskbar */
.taskbar {
  display: grid;
  grid-template-columns: 1fr auto 1fr;
  align-items: center;
  height: 96px;
  padding-bottom: 2px;
  border-top: 2px solid rgba(90, 90, 90, .35);
  background: linear-gradient(98deg, #ececf8 3%, #c9f6f0 6%, #c8f4e2 8%, #bff1f2 11%, #bef0f0 18%, #c5f4e1 22%, #dcf8ba 28%, #dcf8bd 36%, #daf9c9 43%, #ecf8a8 48%, #e4f8b4 50%, #c9f8f0 55%, #c4f7f8 60%, #e0f2fa 64%, #ecedf8 68%, #eeeef8);
  color: #1b1b1b;
  font-size: var(--text-s);
  line-height: 32px;
}
.taskbar button { display: flex; align-items: center; text-align: left; }
.weather { margin-left: 38px; gap: 15px; }
.cloud { position: relative; }
.cloud svg { width: 48px; height: 30px; }
.alert {
  position: absolute;
  top: -18px;
  right: -6px;
  width: 32px;
  height: 32px;
  border-radius: 50%;
  background: #c42b1c;
  color: #fff;
  font-size: var(--text-xs);
  text-align: center;
}
.weather small { color: #4f6664; font-size: var(--text-s); }
.apps { display: flex; align-items: center; gap: 40px; }
.apps button { position: relative; min-width: 48px; }
.apps svg { position: relative; width: 48px; height: 48px; }
.apps .task-search {
  width: 201px;
  height: 60px;
  margin: 0 -12px;
  padding-left: 42px;
  gap: 10px;
  border-radius: 30px;
  background: #f5fdea;
  box-shadow: 0 2px 1px rgba(100, 120, 70, .25);
}
.task-search svg { width: 28px; height: 28px; fill: none; stroke: #1b1b1b; stroke-width: 3; }
.apps .open::after {
  content: "";
  position: absolute;
  left: 18px;
  bottom: -14px;
  width: 12px;
  height: 6px;
  border-radius: 3px;
  background: #858585;
}
.apps .focused::before {
  content: "";
  position: absolute;
  inset: -15px -14px;
  border: 1px solid #e2e2ea;
  border-radius: 8px;
  background: #f9f9fc;
}
.apps .focused::after { left: 8px; width: 32px; background: #0078d4; }
.booking {
  width: 48px;
  height: 48px;
  border-radius: 8px 8px 8px 0;
  background: #1d457c;
  color: #fff;
  font: 700 28px/48px "Open Sans", sans-serif;
  text-align: center;
}
.booking i { color: #0fa5e6; font-style: normal; }
.tray { display: flex; align-items: center; justify-content: flex-end; padding-right: 38px; }
.tray svg { width: 32px; height: 32px; fill: none; stroke: #1b1b1b; stroke-width: 2; overflow: visible; }
.tray button { margin-right: 32px; }
.tray .lang { margin: 0 36px 0 5px; }
.tray .lang, .tray .clock { text-align: center; }
.tray .status { gap: 16px; }
.tray .clock { margin: 0; font-size: 24px; text-align: right; }
```
